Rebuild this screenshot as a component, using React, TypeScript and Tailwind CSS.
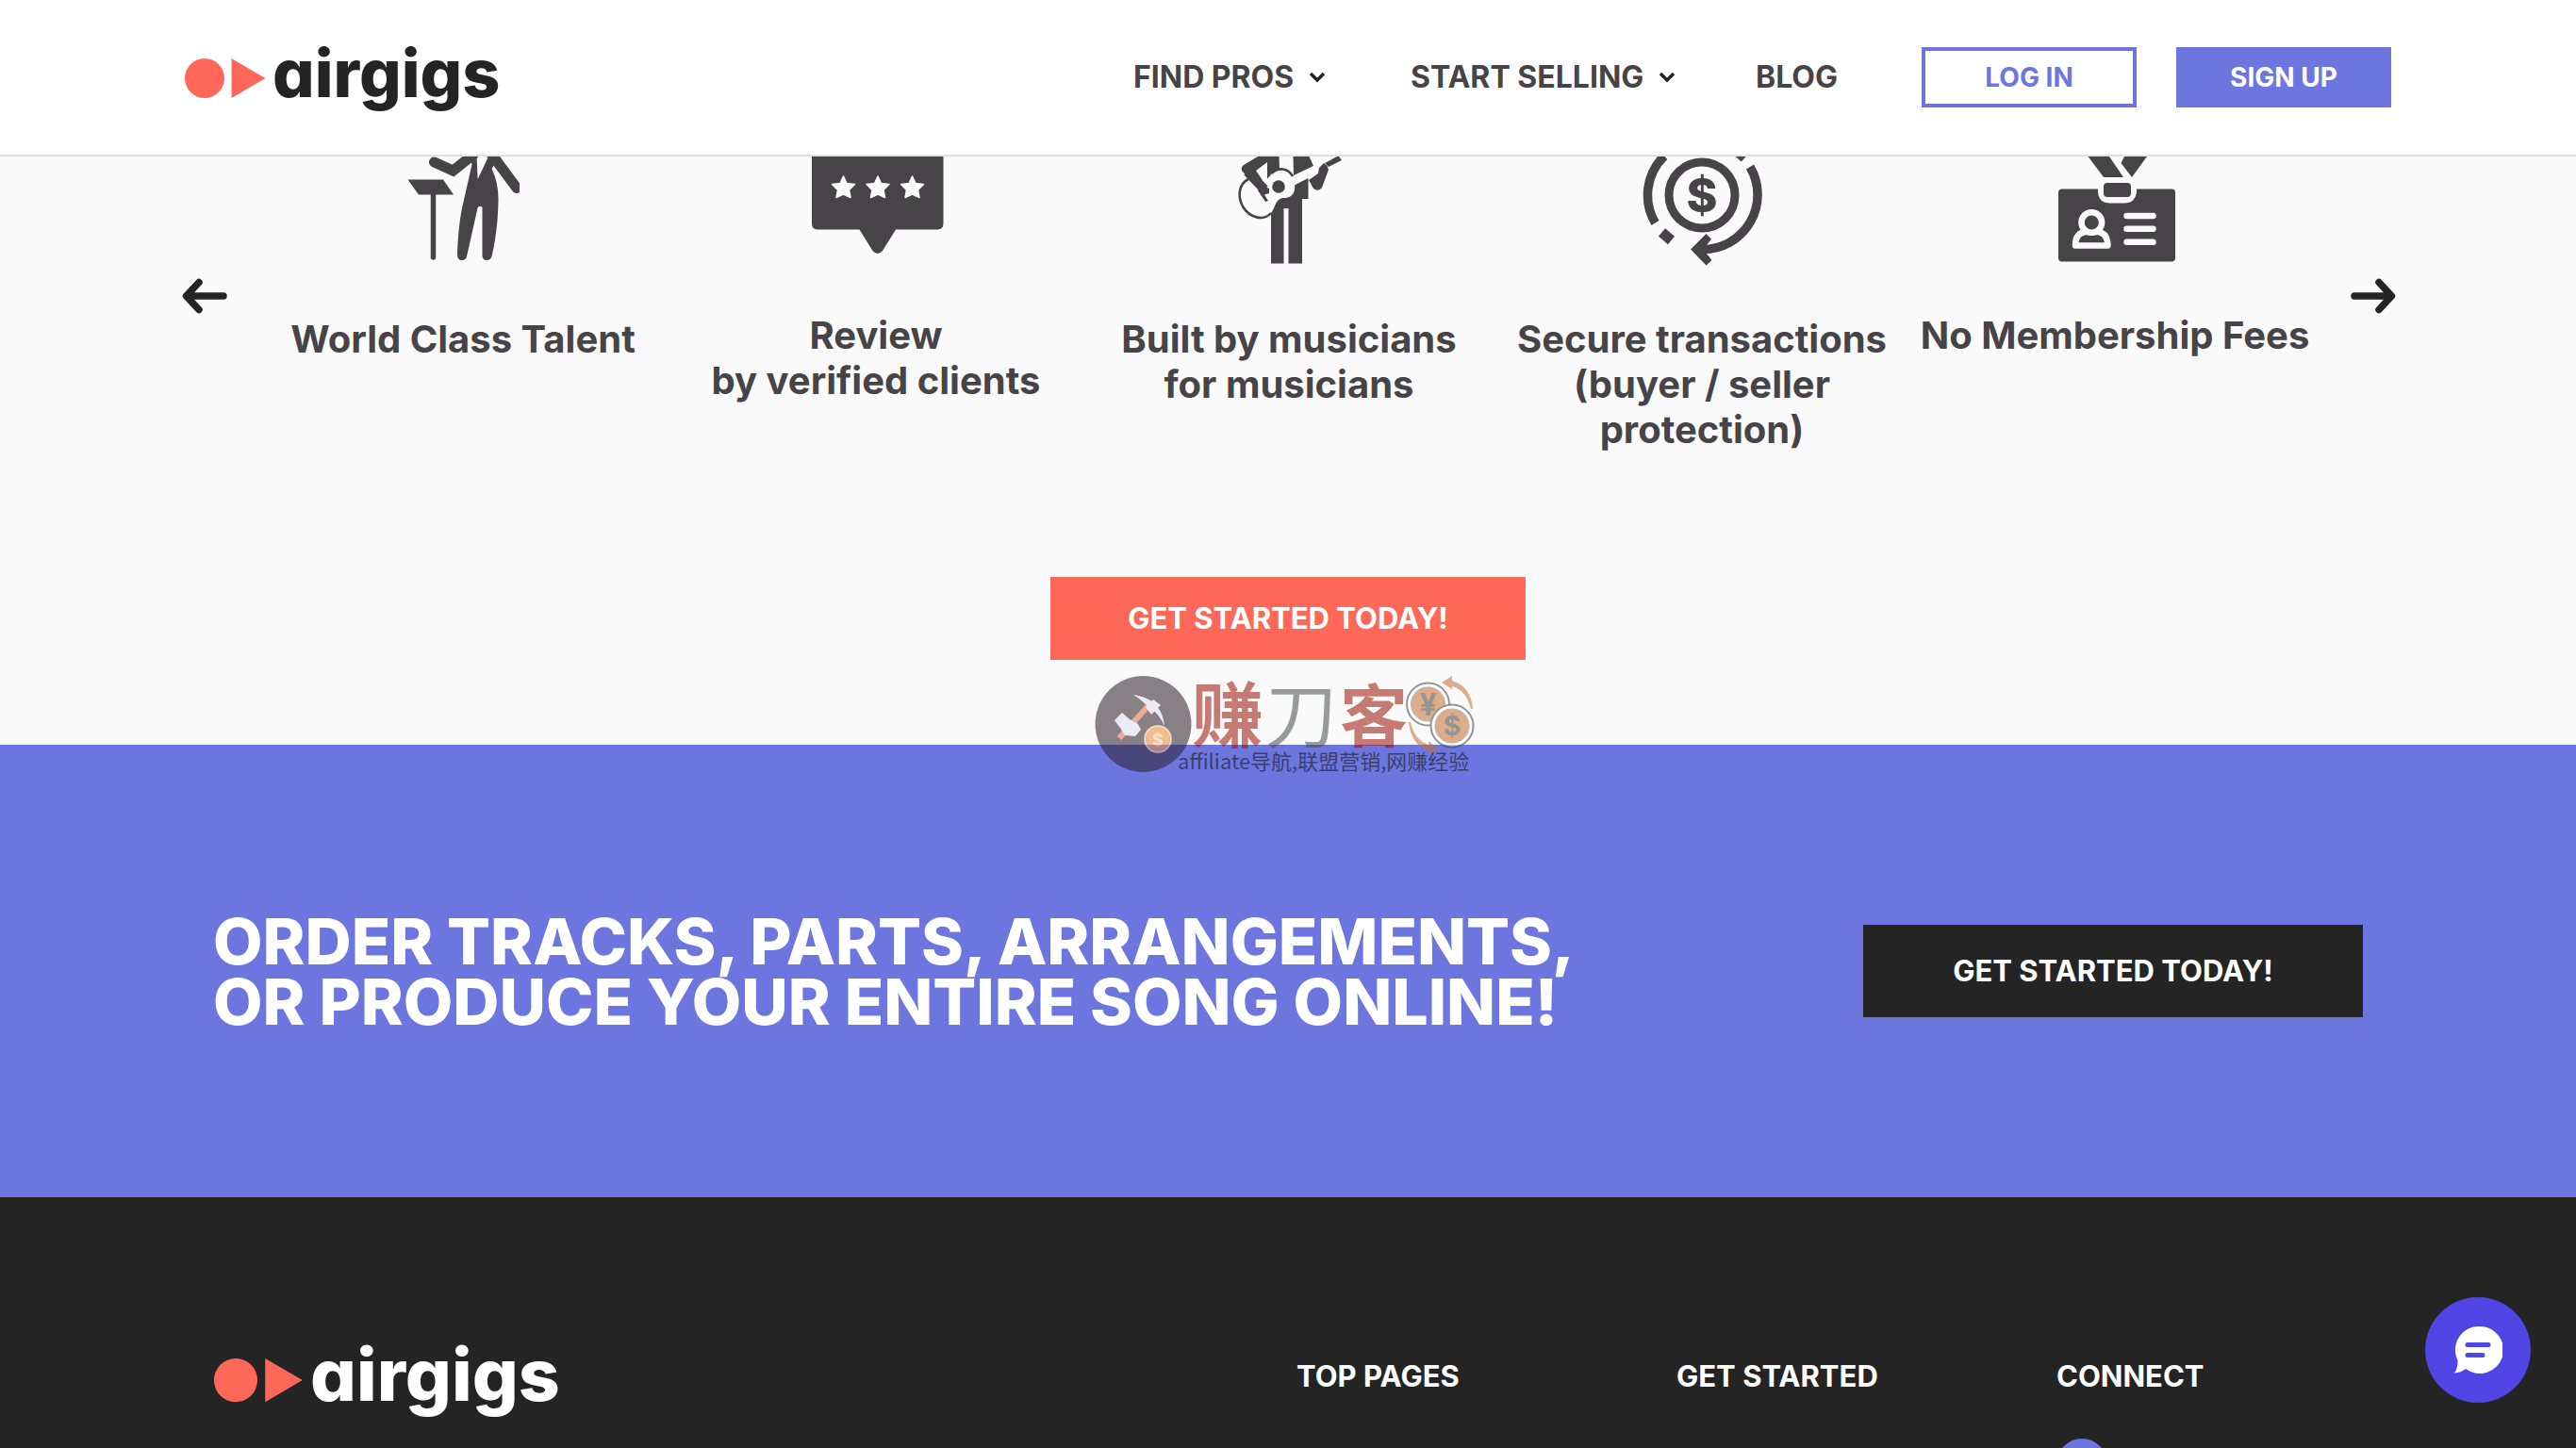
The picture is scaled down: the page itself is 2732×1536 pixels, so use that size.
import { ReactNode } from "react";

interface Feature {
  id: string;
  lines: string[];
  icon: ReactNode;
  tall: boolean;
}

const Logo = ({ className }: { className: string }) => (
  <a href="#" className="shrink-0">
    <svg viewBox="0 0 340 82" className={className}>
      <circle cx="21" cy="42" r="21" fill="#ff6858" />
      <path d="M49.5 21 85.5 42 49.5 63Z" fill="#ff6858" />
      <text
        x="93"
        y="62"
        fill="currentColor"
        className="text-[70px] font-extrabold [font-feature-settings:'cv11']"
      >
        airgigs
      </text>
    </svg>
  </a>
);

const Chevron = () => (
  <svg viewBox="0 0 18 12" className="w-[18px] h-3" fill="none" stroke="#242424" strokeWidth="3.4">
    <path d="M2 2l7 7 7-7" />
  </svg>
);

const ConductorIcon = () => (
  <svg viewBox="431 166 120 112" className="w-[120px] h-28" fill="#474447">
    <path d="M432.5 190.5H470L481 206.5H444Z" />
    <path d="M459.5 204V273" stroke="#474447" strokeWidth="5.5" strokeLinecap="round" />
    <path
      d="M460.5 172 480.5 181 502 164"
      fill="none"
      stroke="#474447"
      strokeWidth="11"
      strokeLinecap="round"
    />
    <path d="M521 163 548 199.5" stroke="#474447" strokeWidth="11" strokeLinecap="round" />
    <path d="M495 166H505.5L506.7 190 518 166H529L521.6 179Q529 195 528.5 213 528 245 521.5 272 520.5 276 516 276 511.7 276 511.5 271V220Q509 217.5 506.7 220L495 272Q494 276 490 276 485 276 485 270 486 235 492 212L500.6 174Z" />
  </svg>
);

const ReviewIcon = () => (
  <svg viewBox="856 166 148 112" className="w-[148px] h-28">
    <path
      d="M862 160H1001.5V237Q1001.5 243.5 995 243.5H951L937 266Q931.7 272 926.5 266L912.5 243.5H868Q862 243.5 862 237Z"
      fill="#474447"
    />
    {[895.5, 932, 968.5].map((x) => (
      <path
        key={x}
        transform={`translate(${x} 199)`}
        d="M0-12 3.5-4.5 12-3.5 6 2.5 7.5 10.5 0 7-7.5 10.5-6 2.5-12-3.5-3.5-4.5Z"
        fill="#fafafa"
        stroke="#fafafa"
        strokeWidth="1.5"
        strokeLinejoin="round"
      />
    ))}
  </svg>
);

const GuitaristIcon = () => (
  <svg viewBox="1308 166 120 116" className="w-[120px] h-[116px]" fill="#474447">
    <path d="M1335 166H1357.5L1358 179 1345 190V172L1333 181 1348 203 1341 207 1318 181Q1317 177 1320 175Z" />
    <path d="M1372.5 166H1389.5L1394 176 1373 186Z" />
    <path d="M1349 212 1374 196 1388.5 189V211H1382V279.5H1367.5V221H1362.5V279.5H1349Z" />
    <path
      d="M1325 190C1315 195 1313 208 1319 219 1326 231 1341 235 1349 226 1354 220 1353 212 1361 210 1374 211 1377 200 1372 188 1367 178 1356 177 1350 184L1344 191Z"
      fill="#fafafa"
    />
    <path
      d="M1325 190C1315 195 1313 208 1319 219 1326 231 1341 235 1349 226M1350 184C1356 177 1367 178 1372 187"
      fill="none"
      stroke="#474447"
      strokeWidth="2.6"
    />
    <path d="M1370 194 1399 178" stroke="#fafafa" strokeWidth="8" />
    <circle cx="1357" cy="198" r="6.8" />
    <path d="M1324 182 1342 201" stroke="#474447" strokeWidth="10" />
    <path d="M1338 196 1347 200 1347 205 1342 206.5 1346 213 1343 214 1335 202Z" />
    <path d="M1405 173 1408.5 176 1410 180 1403 199Q1399 204 1394 200L1389 191 1399 184 1400 178Z" />
    <path d="M1406 173 1419 166H1421L1424 170 1410 177Z" />
  </svg>
);

const SecureIcon = () => (
  <svg viewBox="1740 166 132 118" className="w-[132px] h-[118px]" fill="none" stroke="#474447">
    <circle cx="1806" cy="207" r="35" strokeWidth="9" />
    <g strokeWidth="9.5">
      <path d="M1766 165.5A58 58 0 0 0 1756.5 236.5" />
      <path d="M1763.5 246.5 1773.5 255" strokeWidth="11" />
      <path d="M1844 162 1851 168" />
      <path d="M1857 177A58 58 0 0 1 1806 264.5" />
    </g>
    <path
      d="M1794 264.5 1810.5 248 1816 253.5 1811 260V269L1816.5 276 1810.5 281.5Z"
      fill="#474447"
      stroke="none"
    />
    <text
      x="1806"
      y="225"
      textAnchor="middle"
      fill="#474447"
      stroke="none"
      className="text-[50px] font-extrabold"
    >
      $
    </text>
  </svg>
);

const BadgeIcon = () => (
  <svg viewBox="2174 166 140 114" className="w-[140px] h-[114px]" fill="#474447">
    <rect x="2184" y="200.5" width="124" height="77" rx="4" />
    <path d="M2215.5 166H2238L2253 188H2232Z" />
    <path d="M2254 166H2278L2262 188 2250.5 173Z" />
    <path d="M2226 194H2267V204Q2265 215.5 2254 215.5H2239Q2227 215.5 2226 204Z" fill="#fafafa" />
    <rect x="2232" y="194" width="29" height="15" rx="4" />
    <g stroke="#fafafa" strokeWidth="6.5" strokeLinejoin="round" strokeLinecap="round">
      <path d="M2202 260.5Q2202 247 2213 246H2226Q2236 247 2236.5 260.5Z" />
      <circle cx="2219.3" cy="236" r="10.8" />
      <path d="M2256.5 229H2284.5M2256.5 242.8H2284.5M2256.5 256.7H2284.5" />
    </g>
  </svg>
);

const features: Feature[] = [
  { id: "talent", lines: ["World Class Talent"], icon: <ConductorIcon />, tall: true },
  { id: "review", lines: ["Review", "by verified clients"], icon: <ReviewIcon />, tall: false },
  { id: "built", lines: ["Built by musicians", "for musicians"], icon: <GuitaristIcon />, tall: true },
  {
    id: "secure",
    lines: ["Secure transactions", "(buyer / seller", "protection)"],
    icon: <SecureIcon />,
    tall: true,
  },
  { id: "fees", lines: ["No Membership Fees"], icon: <BadgeIcon />, tall: false },
];

const Arrow = ({ className }: { className?: string }) => (
  <svg
    viewBox="0 0 50 38"
    className={className}
    fill="none"
    stroke="#242424"
    strokeWidth="7.5"
    strokeLinecap="round"
    strokeLinejoin="round"
  >
    <path d="M19 4.5 5.5 19 19 33.5M7 19H45" />
  </svg>
);

// partner stamp that floats over the edge of the banner
const Stamp = () => (
  <svg
    viewBox="1160 706 412 124"
    className="absolute left-1/2 -top-[84px] w-[412px] h-[124px] -translate-x-1/2 pointer-events-none opacity-55"
  >
    <circle cx="1212.5" cy="768" r="51" fill="#2b2029" />
    <path d="M1187 783 1222 744" stroke="#e2703f" strokeWidth="6" />
    <path d="M1202 737Q1232 741 1235 770 1228 755 1217 749 1210 742 1202 737Z" fill="#dfe0f0" />
    <path d="M1215 750 1223 742 1231 748 1221 758Z" fill="#dfe0f0" />
    <path
      d="M1182 764 1190 756 1198 763 1207 768 1210 774 1204 781 1193 780 1188 772Z"
      fill="#dfe0f0"
    />
    <circle cx="1228" cy="784" r="14" fill="#e88a3c" stroke="#f2cba6" strokeWidth="1.5" />
    <text x="1228" y="791" textAnchor="middle" fill="#f6d3a8" className="text-[18px] font-bold">
      $
    </text>
    <g className="font-['Noto_Sans_CJK_SC',sans-serif]">
      <g fill="#9b1207" className="text-[76px] font-bold">
        <text x="1264" y="787">赚</text>
        <text x="1342" y="787" fill="#4a4f4e" className="font-normal">
          刀
        </text>
        <text x="1421" y="786" className="text-[72px]">
          客
        </text>
      </g>
      <text x="1249" y="816" fill="#111" className="text-[22px]">
        affiliate导航,联盟营销,网赚经验
      </text>
    </g>
    <circle cx="1514.5" cy="747" r="22.5" fill="#fff" stroke="#444" strokeWidth="2" />
    <circle cx="1514.5" cy="747" r="18" fill="#c7702e" stroke="#777" />
    <text x="1514.5" y="759" textAnchor="middle" fill="#444" className="text-[32px] font-bold">
      ¥
    </text>
    <circle cx="1540" cy="770" r="22.5" fill="#fff" stroke="#444" strokeWidth="2" />
    <circle cx="1540" cy="770" r="18" fill="#c7702e" stroke="#777" />
    <text x="1540" y="780" textAnchor="middle" fill="#444" className="text-[29px] font-bold">
      $
    </text>
    <path d="M1529 724 1540 717V722Q1560 728 1562 752H1560Q1555 732 1540 728V731Z" fill="#c7702e" />
    <path d="M1494 766H1496Q1500 785 1515 790V786L1526 795 1515 801V796Q1497 791 1494 766Z" fill="#c7702e" />
  </svg>
);

const FooterHeading = ({ children }: { children: ReactNode }) => (
  <h3 className="text-[31px] leading-9 font-bold text-white">{children}</h3>
);

export default function App() {
  return (
    <div className="flex flex-col h-screen overflow-hidden bg-[#fafafa] font-['Inter',sans-serif]">
      <header className="shrink-0 flex items-center justify-between h-[166px] px-[196px] bg-white border-b-2 border-[#e1e0e6]">
        <Logo className="w-[340px] h-[82px] text-[#242424]" />
        <nav className="flex items-center text-[32px] leading-9 font-bold text-[#474447]">
          <a href="#" className="flex items-center gap-4 w-[294px]">
            FIND PROS
            <Chevron />
          </a>
          <a href="#" className="flex items-center gap-4 w-[366px]">
            START SELLING
            <Chevron />
          </a>
          <a href="#" className="w-[176px]">
            BLOG
          </a>
          <div className="flex gap-[42px] text-[28px]">
            <button className="w-[228px] h-16 border-4 border-[#6d76df] text-[#6d76df]">LOG IN</button>
            <button className="w-[228px] h-16 bg-[#6d76df] text-white">SIGN UP</button>
          </div>
        </nav>
      </header>

      <section className="shrink-0 flex flex-col items-center pb-[90px]">
        <div className="flex w-full pl-[192px] pr-[190px]">
          <button aria-label="Previous" className="w-20 h-[38px] mt-[129px]">
            <Arrow className="w-[50px] h-[38px]" />
          </button>
          <ul className="flex-1 grid grid-cols-5">
            {features.map((feature) => (
              <li key={feature.id} className="flex flex-col items-center">
                <div className={feature.tall ? "h-[170px]" : "h-[166px]"}>{feature.icon}</div>
                <h3 className="text-[40px] leading-[48px] font-bold text-center text-[#474447] whitespace-nowrap">
                  {feature.lines.map((line) => (
                    <span key={line} className="block">
                      {line}
                    </span>
                  ))}
                </h3>
              </li>
            ))}
          </ul>
          <button aria-label="Next" className="flex justify-end w-20 h-[38px] mt-[129px]">
            <Arrow className="w-[50px] h-[38px] rotate-180" />
          </button>
        </div>
        <button className="w-[504px] h-[88px] mt-[132px] bg-[#ff6858] text-[31px] font-bold text-white">
          GET STARTED TODAY!
        </button>
      </section>

      <section className="relative shrink-0 flex items-center justify-between h-[480px] px-[226px] bg-[#6d76df]">
        <Stamp />
        <h2 className="text-[68px] leading-[64px] font-extrabold text-white whitespace-nowrap">
          ORDER TRACKS, PARTS, ARRANGEMENTS,
          <br />
          OR PRODUCE YOUR ENTIRE SONG ONLINE!
        </h2>
        <button className="w-[530px] h-[98px] bg-[#242424] text-[31px] font-bold text-white">
          GET STARTED TODAY!
        </button>
      </section>

      <footer className="flex-1 min-h-0 overflow-hidden flex items-start px-[226px] pt-[148px] bg-[#242424]">
        <div className="flex-1">
          <Logo className="w-[375px] h-[90px] text-white" />
        </div>
        <div className="w-[403px] pt-6">
          <FooterHeading>TOP PAGES</FooterHeading>
        </div>
        <div className="w-[403px] pt-6">
          <FooterHeading>GET STARTED</FooterHeading>
        </div>
        <div className="w-[325px] pt-6">
          <FooterHeading>CONNECT</FooterHeading>
          <a
            href="#"
            aria-label="Social profile"
            className="block w-[54px] h-[54px] mt-12 rounded-full bg-[#6d76df]"
          />
        </div>
      </footer>

      <button
        aria-label="Open chat"
        className="fixed right-12 bottom-12 flex items-center justify-center w-28 h-28 rounded-full bg-[#4f46e5]"
      >
        <svg viewBox="0 0 52 52" className="w-[52px] h-[52px]">
          <path d="M27 1A25 25 0 1 1 13 46Q8 50 1 50.5 5 45 4.5 37A25 25 0 0 1 27 1Z" fill="#fff" />
          <path d="M15 20.5H37M15 31.5H31" stroke="#4f46e5" strokeWidth="5" strokeLinecap="round" />
        </svg>
      </button>
    </div>
  );
}
